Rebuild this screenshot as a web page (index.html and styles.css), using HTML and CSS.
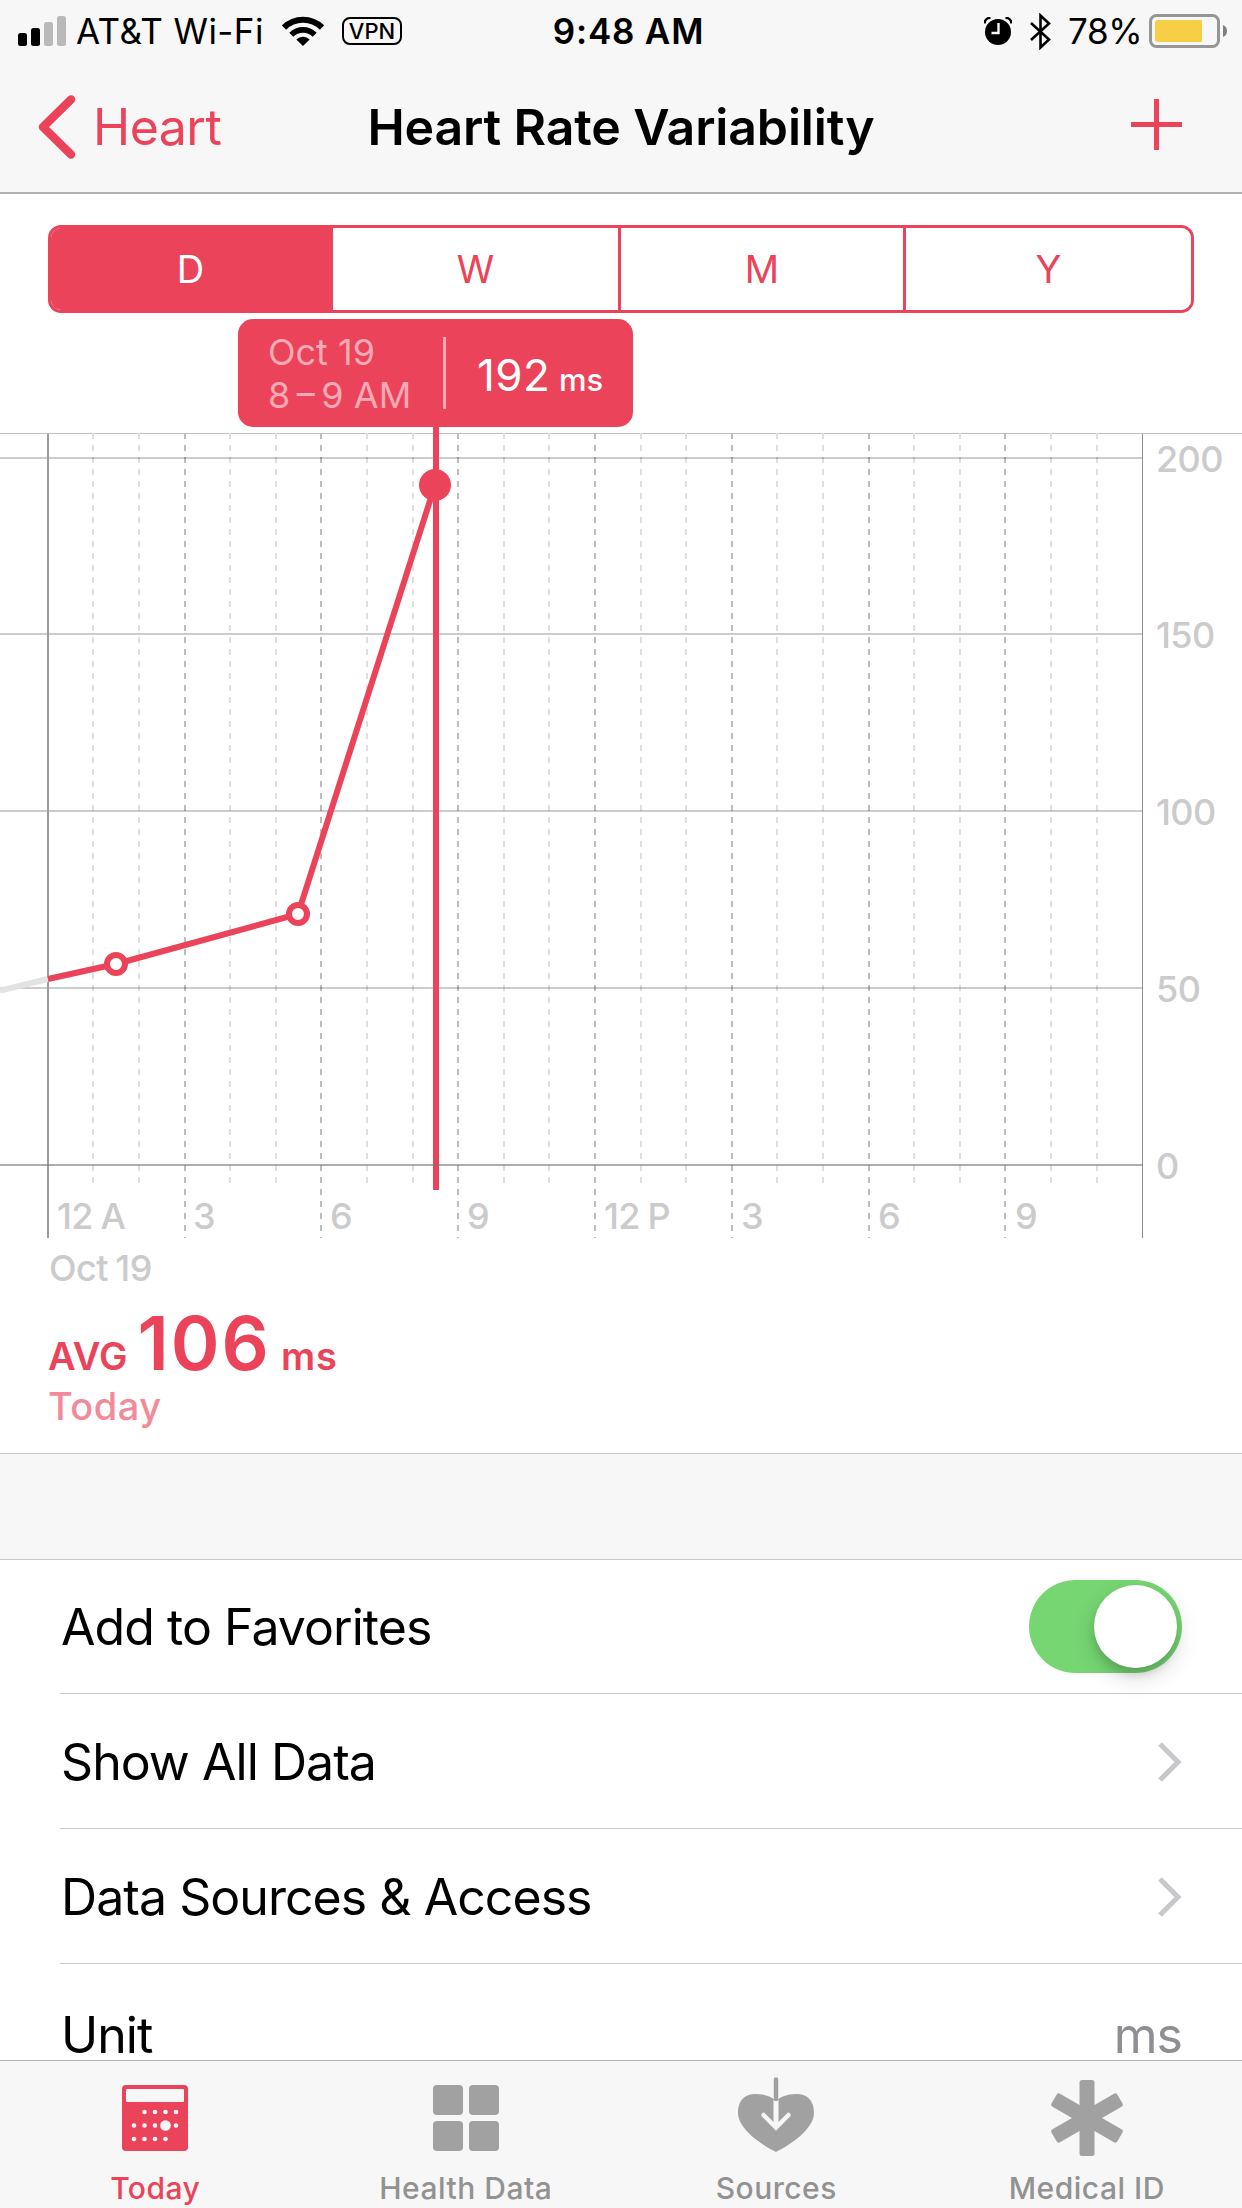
FILE: index.html
```html
<!DOCTYPE html>
<html lang="en">
<head>
    <meta charset="UTF-8">
    <meta name="viewport" content="width=device-width, initial-scale=1.0">
    <title>Heart Rate Variability</title>
    <link rel="stylesheet" href="styles.css">
</head>
<body>
    <header class="header">
        <div class="status-bar">
            <div class="status-left">
                <svg class="signal" width="49" height="30" viewBox="0 0 49 30">
                    <rect x="0" y="17" width="9" height="13" rx="2.5"/>
                    <rect x="13" y="12" width="9" height="18" rx="2.5"/>
                    <rect class="off" x="26" y="6" width="9" height="24" rx="2.5"/>
                    <rect class="off" x="39" y="0" width="9" height="30" rx="2.5"/>
                </svg>
                <span class="carrier">AT&amp;T Wi-Fi</span>
                <svg class="wifi" width="42" height="30" viewBox="0 0 42 30">
                    <path d="M2 11.5 A27 27 0 0 1 40 11.5" fill="none" stroke="#000" stroke-width="6"/>
                    <path d="M9.3 18.7 A16.6 16.6 0 0 1 32.7 18.7" fill="none" stroke="#000" stroke-width="5.6"/>
                    <path d="M21 30 L14.3 23.4 A9.5 9.5 0 0 1 27.7 23.4 Z"/>
                </svg>
                <span class="vpn">VPN</span>
            </div>
            <span class="time">9:48 AM</span>
            <div class="status-right">
                <svg class="alarm" width="28" height="28" viewBox="0 0 28 28">
                    <circle cx="14" cy="15" r="13"/>
                    <path d="M0.5 6.5 A6 6 0 0 1 6.5 0.8 M27.5 6.5 A6 6 0 0 0 21.5 0.8" fill="none" stroke="#000" stroke-width="2.6"/>
                    <path d="M14.5 6 V16 H7.5" fill="none" stroke="#f7f7f7" stroke-width="2.4"/>
                </svg>
                <svg class="bluetooth" width="21" height="37" viewBox="0 0 21 37">
                    <path d="M1 10 L19 26.5 L10.5 34.5 V2.5 L19 10.5 L1 27" fill="none" stroke="#000" stroke-width="2.6"/>
                </svg>
                <span class="percent">78%</span>
                <svg class="battery" width="79" height="34" viewBox="0 0 79 34">
                    <rect x="1.5" y="1.5" width="68" height="31" rx="6" fill="none" stroke="#969696" stroke-width="3"/>
                    <path d="M9 6 H53 V28 H9 A3 3 0 0 1 6 25 V9 A3 3 0 0 1 9 6 Z" fill="#f7ce46"/>
                    <path d="M74 11 A6.5 6.5 0 0 1 74 23 Z" fill="#808080"/>
                </svg>
            </div>
        </div>
        <nav class="nav-bar">
            <a class="back">
                <svg width="38" height="64" viewBox="0 0 38 64">
                    <path d="M33 4.5 L5 32 L33 59.5" fill="none" stroke="#eb445a" stroke-width="8.5" stroke-linecap="round" stroke-linejoin="round"/>
                </svg>
                <span>Heart</span>
            </a>
            <h1 class="nav-title">Heart Rate Variability</h1>
            <svg class="add" width="51" height="51" viewBox="0 0 51 51">
                <path d="M25.5 0 V51 M0 25.5 H51" stroke="#eb445a" stroke-width="5"/>
            </svg>
        </nav>
    </header>

    <div class="segments">
        <button class="segment active">D</button>
        <button class="segment">W</button>
        <button class="segment">M</button>
        <button class="segment">Y</button>
    </div>

    <section class="chart">
        <svg width="1242" height="977" viewBox="0 313 1242 977">
            <path class="top-line" d="M0 433.5 H1242"/>
            <g id="hour-lines"></g>
            <path class="grid" d="M0 458 H1142 M0 634 H1142 M0 811 H1142 M0 988 H1142"/>
            <path class="day-start" d="M48 434 V1238"/>
            <path class="day-end" d="M1142.5 434 V1238"/>

            <path class="line-past" d="M0 990.5 L48 979"/>
            <path class="line" d="M48 979 L116 964 L298 914 L435 485"/>
            <path class="cursor" d="M436 427 V1190"/>
            <path class="zero-line" d="M0 1165 H1142"/>
            <circle class="dot" cx="116" cy="964" r="9"/>
            <circle class="dot" cx="298" cy="914" r="9"/>
            <circle class="dot-selected" cx="435" cy="485" r="16"/>

            <g class="labels">
                <text x="1156" y="472">200</text>
                <text x="1156" y="648">150</text>
                <text x="1156" y="825">100</text>
                <text x="1156" y="1002">50</text>
                <text x="1156" y="1179">0</text>
                <text x="57" y="1229">12 A</text>
                <text x="193" y="1229">3</text>
                <text x="330" y="1229">6</text>
                <text x="467" y="1229">9</text>
                <text x="604" y="1229">12 P</text>
                <text x="741" y="1229">3</text>
                <text x="878" y="1229">6</text>
                <text x="1015" y="1229">9</text>
                <text x="49" y="1281">Oct 19</text>
            </g>
        </svg>
        <div class="tooltip">
            <div class="tooltip-date">Oct 19<br>8&thinsp;–&thinsp;9 AM</div>
            <div class="tooltip-value">192 <small>ms</small></div>
        </div>
    </section>

    <section class="summary">
        <div class="average"><span class="avg">AVG</span><span class="number">106</span><span class="unit">ms</span></div>
        <div class="period">Today</div>
    </section>

    <div class="spacer"></div>

    <ul class="list">
        <li class="row first">
            <span>Add to Favorites</span>
            <span class="toggle"><span class="knob"></span></span>
        </li>
        <li class="row">
            <span>Show All Data</span>
            <svg width="24" height="40" viewBox="0 0 24 40"><path d="M2 2 L20 20 L2 38" fill="none" stroke="#c7c7cc" stroke-width="5"/></svg>
        </li>
        <li class="row">
            <span>Data Sources &amp; Access</span>
            <svg width="24" height="40" viewBox="0 0 24 40"><path d="M2 2 L20 20 L2 38" fill="none" stroke="#c7c7cc" stroke-width="5"/></svg>
        </li>
        <li class="row last">
            <span>Unit</span>
            <span class="value">ms</span>
        </li>
    </ul>

    <footer class="tab-bar">
        <a class="tab active">
            <svg width="78" height="80" viewBox="0 0 78 80">
                <rect x="6" y="8" width="66" height="66" rx="4" fill="#eb445a"/>
                <rect x="10" y="12" width="58" height="13" rx="1" fill="#f7f7f7"/>
                <g fill="#f7f7f7">
                    <circle cx="28.5" cy="35" r="2.3"/><circle cx="39" cy="35" r="2.3"/><circle cx="49.5" cy="35" r="2.3"/><circle cx="60" cy="35" r="2.3"/>
                    <circle cx="18" cy="48.5" r="2.3"/><circle cx="28.5" cy="48.5" r="2.3"/><circle cx="39" cy="48.5" r="2.3"/><circle cx="49.5" cy="48.5" r="5.3"/><circle cx="60" cy="48.5" r="2.3"/>
                    <circle cx="18" cy="62" r="2.3"/><circle cx="28.5" cy="62" r="2.3"/><circle cx="39" cy="62" r="2.3"/><circle cx="49.5" cy="62" r="2.3"/>
                </g>
            </svg>
            <span>Today</span>
        </a>
        <a class="tab">
            <svg width="78" height="80" viewBox="0 0 78 80" fill="#a1a1a1">
                <rect x="6" y="8" width="30" height="30" rx="4"/>
                <rect x="42" y="8" width="30" height="30" rx="4"/>
                <rect x="6" y="44" width="30" height="30" rx="4"/>
                <rect x="42" y="44" width="30" height="30" rx="4"/>
            </svg>
            <span>Health Data</span>
        </a>
        <a class="tab">
            <svg width="78" height="80" viewBox="0 0 78 80">
                <path d="M39 75 C25 68 1 52 1 36 C1 22 9 17 19 17 C28 17 35 20 39 24 C43 20 50 17 59 17 C69 17 77 22 77 36 C77 52 53 68 39 75 Z" fill="#a1a1a1"/>
                <path d="M39 23 V50" fill="none" stroke="#f7f7f7" stroke-width="5"/>
                <path d="M26.5 38 L39 50.5 L51.5 38" fill="none" stroke="#f7f7f7" stroke-width="4.5" stroke-linecap="round"/>
                <path d="M39 2.5 V22" stroke="#a1a1a1" stroke-width="4.5" stroke-linecap="round"/>
            </svg>
            <span>Sources</span>
        </a>
        <a class="tab">
            <svg width="78" height="80" viewBox="0 0 78 80" fill="#a1a1a1">
                <rect x="31.5" y="3" width="15" height="76" rx="2.5"/>
                <rect x="31.5" y="3" width="15" height="76" rx="2.5" transform="rotate(60 39 41)"/>
                <rect x="31.5" y="3" width="15" height="76" rx="2.5" transform="rotate(-60 39 41)"/>
            </svg>
            <span>Medical ID</span>
        </a>
    </footer>

    <script>
        const hourLines = document.getElementById('hour-lines');

        // one dashed line per hour, every third one is longer and darker
        for (let hour = 1; hour < 24; hour++) {
            const x = Math.round(47.8 + hour * 45.6);
            const isMajor = hour % 3 === 0;
            const line = document.createElementNS('http://www.w3.org/2000/svg', 'path');
            line.setAttribute('d', `M${x} 433 V${isMajor ? 1238 : 1183}`);
            line.setAttribute('class', isMajor ? 'hour major' : 'hour');
            hourLines.appendChild(line);
        }
    </script>
</body>
</html>
```

FILE: styles.css
```css
* {
    box-sizing: border-box;
}
body {
    font-family: Inter, "Liberation Sans", sans-serif;
    background-color: #fff;
    color: #000;
    margin: 0;
    padding: 0;
    width: 1242px;
    height: 2208px;
    overflow: hidden;
}
svg {
    display: block;
    flex-shrink: 0;
}
.header {
    background-color: #f7f7f7;
    border-bottom: 2px solid #b2b2b2;
    height: 194px;
}
.status-bar {
    display: grid;
    grid-template-columns: 1fr auto 1fr;
    align-items: center;
    height: 62px;
    padding: 0 14px 0 18px;
    font-size: 35px;
    white-space: nowrap;
}
.status-left,
.status-right {
    display: flex;
    align-items: center;
}
.status-right {
    justify-content: flex-end;
}
.signal .off {
    fill: #b9b9b9;
}
.carrier {
    margin-left: 9px;
    width: 188px;
    letter-spacing: 0.4px;
}
.wifi {
    margin-left: 18px;
}
.vpn {
    margin-left: 18px;
    width: 60px;
    height: 28px;
    border: 2px solid #000;
    border-radius: 8px;
    font-size: 22px;
    font-weight: 500;
    line-height: 25px;
    text-align: center;
}
.time {
    margin-left: 11px;
    font-weight: 600;
    letter-spacing: 0.8px;
}
.bluetooth {
    margin-left: 18px;
}
.percent {
    margin-left: 17px;
    width: 74px;
    letter-spacing: -0.4px;
}
.battery {
    margin-left: 7px;
}
.nav-bar {
    display: grid;
    grid-template-columns: 1fr auto 1fr;
    align-items: center;
    height: 130px;
    padding: 0 60px;
    font-size: 50px;
}
.back {
    display: flex;
    align-items: center;
    gap: 17px;
    margin-left: -22px;
    color: #eb445a;
    letter-spacing: -0.5px;
}
.nav-title {
    margin: 0;
    font-size: 50px;
    font-weight: 600;
    letter-spacing: -0.15px;
}
.add {
    justify-self: end;
    margin-bottom: 6px;
}
.segments {
    display: flex;
    margin: 31px 48px 0;
    width: 1146px;
    height: 88px;
    border: 3px solid #eb445a;
    border-radius: 13px;
    overflow: hidden;
}
.segment {
    flex: 0 0 285px;
    padding: 0;
    border: none;
    border-right: 3px solid #eb445a;
    background-color: #fff;
    color: #eb445a;
    font-family: inherit;
    font-size: 38px;
}
.segment:first-child {
    flex-basis: 282px;
}
.segment:nth-child(2) {
    flex-basis: 288px;
}
.segment:last-child {
    border-right: none;
}
.segment.active {
    background-color: #eb445a;
    color: #fff;
}
.chart {
    position: relative;
}
.top-line {
    stroke: #bfbfbf;
}
.hour {
    stroke: #dfdfdf;
    stroke-width: 2;
    stroke-dasharray: 6 6;
}
.hour.major {
    stroke: #bdbdbd;
}
.grid {
    stroke: #000;
    stroke-opacity: 0.2;
    stroke-width: 2;
}
.zero-line {
    stroke: #777;
    stroke-opacity: 0.6;
    stroke-width: 2;
}
.day-start {
    stroke: #9b9b9b;
    stroke-width: 2;
}
.day-end {
    stroke: #8e8e8e;
}
.line,
.line-past,
.cursor {
    fill: none;
    stroke: #eb445a;
    stroke-width: 6;
}
.line-past {
    stroke: #e3e3e3;
}
.dot {
    fill: #fff;
    stroke: #eb445a;
    stroke-width: 6;
}
.dot-selected {
    fill: #eb445a;
}
.labels {
    fill: #cbcbcb;
    font-size: 36px;
    font-weight: 500;
    letter-spacing: -0.6px;
    word-spacing: -1.5px;
}
.tooltip {
    position: absolute;
    top: 6px;
    left: 238px;
    display: flex;
    align-items: center;
    width: 395px;
    height: 108px;
    border-radius: 15px;
    background-color: #eb445a;
    color: #fff;
    white-space: nowrap;
}
.tooltip-date {
    display: flex;
    align-items: center;
    width: 208px;
    height: 72px;
    padding: 2px 0 0 30px;
    border-right: 3px solid #f6aab5;
    color: #f6aab5;
    font-size: 36px;
    line-height: 43px;
}
.tooltip-value {
    padding: 3px 0 0 31px;
    font-size: 44px;
    letter-spacing: 0.4px;
    word-spacing: -4px;
}
.tooltip-value small {
    font-size: 31px;
    font-weight: 500;
    letter-spacing: 0;
}
.summary {
    height: 163px;
    padding: 13px 48px 0;
    color: #eb445a;
    font-weight: 600;
}
.average {
    display: flex;
    align-items: baseline;
    height: 80px;
    font-size: 38px;
    line-height: 80px;
}
.number {
    margin-left: 10px;
    font-size: 74px;
    letter-spacing: 2px;
}
.unit {
    margin-left: 10px;
    letter-spacing: 0.8px;
}
.period {
    color: #f28a99;
    font-size: 38px;
    font-weight: 500;
    line-height: 46px;
    letter-spacing: 0.5px;
}
.spacer {
    height: 107px;
    background-color: #f7f7f7;
    border-top: 1px solid #c8c7cc;
    border-bottom: 1px solid #c8c7cc;
}
.list {
    list-style: none;
    margin: 0;
    padding: 0 0 0 60px;
}
.row {
    display: flex;
    align-items: center;
    justify-content: space-between;
    height: 135px;
    padding: 1px 60px 0 1px;
    border-bottom: 1px solid #c8c7cc;
    font-size: 50px;
    letter-spacing: -0.95px;
}
.row.first {
    height: 134px;
    padding-top: 0;
}
.row.last {
    height: 141px;
}
.value {
    color: #8e8e93;
}
.toggle {
    display: flex;
    justify-content: flex-end;
    width: 153px;
    height: 93px;
    padding: 5px;
    border-radius: 47px;
    background-color: #76d672;
}
.knob {
    width: 83px;
    height: 83px;
    border-radius: 50%;
    background-color: #fff;
    box-shadow: 0 9px 24px rgba(0, 0, 0, 0.15), 0 7px 8px rgba(0, 0, 0, 0.12);
}
.tab-bar {
    position: fixed;
    bottom: 0;
    left: 0;
    display: flex;
    width: 1242px;
    height: 148px;
    background-color: #f7f7f7;
    border-top: 1px solid #b2b2b2;
}
.tab {
    flex: 1;
    display: flex;
    flex-direction: column;
    align-items: center;
    padding-top: 16px;
    color: #929292;
    font-size: 30px;
    font-weight: 500;
    line-height: 36px;
    letter-spacing: 0.5px;
}
.tab span {
    margin-top: 13px;
}
.tab.active {
    color: #eb445a;
}
```
